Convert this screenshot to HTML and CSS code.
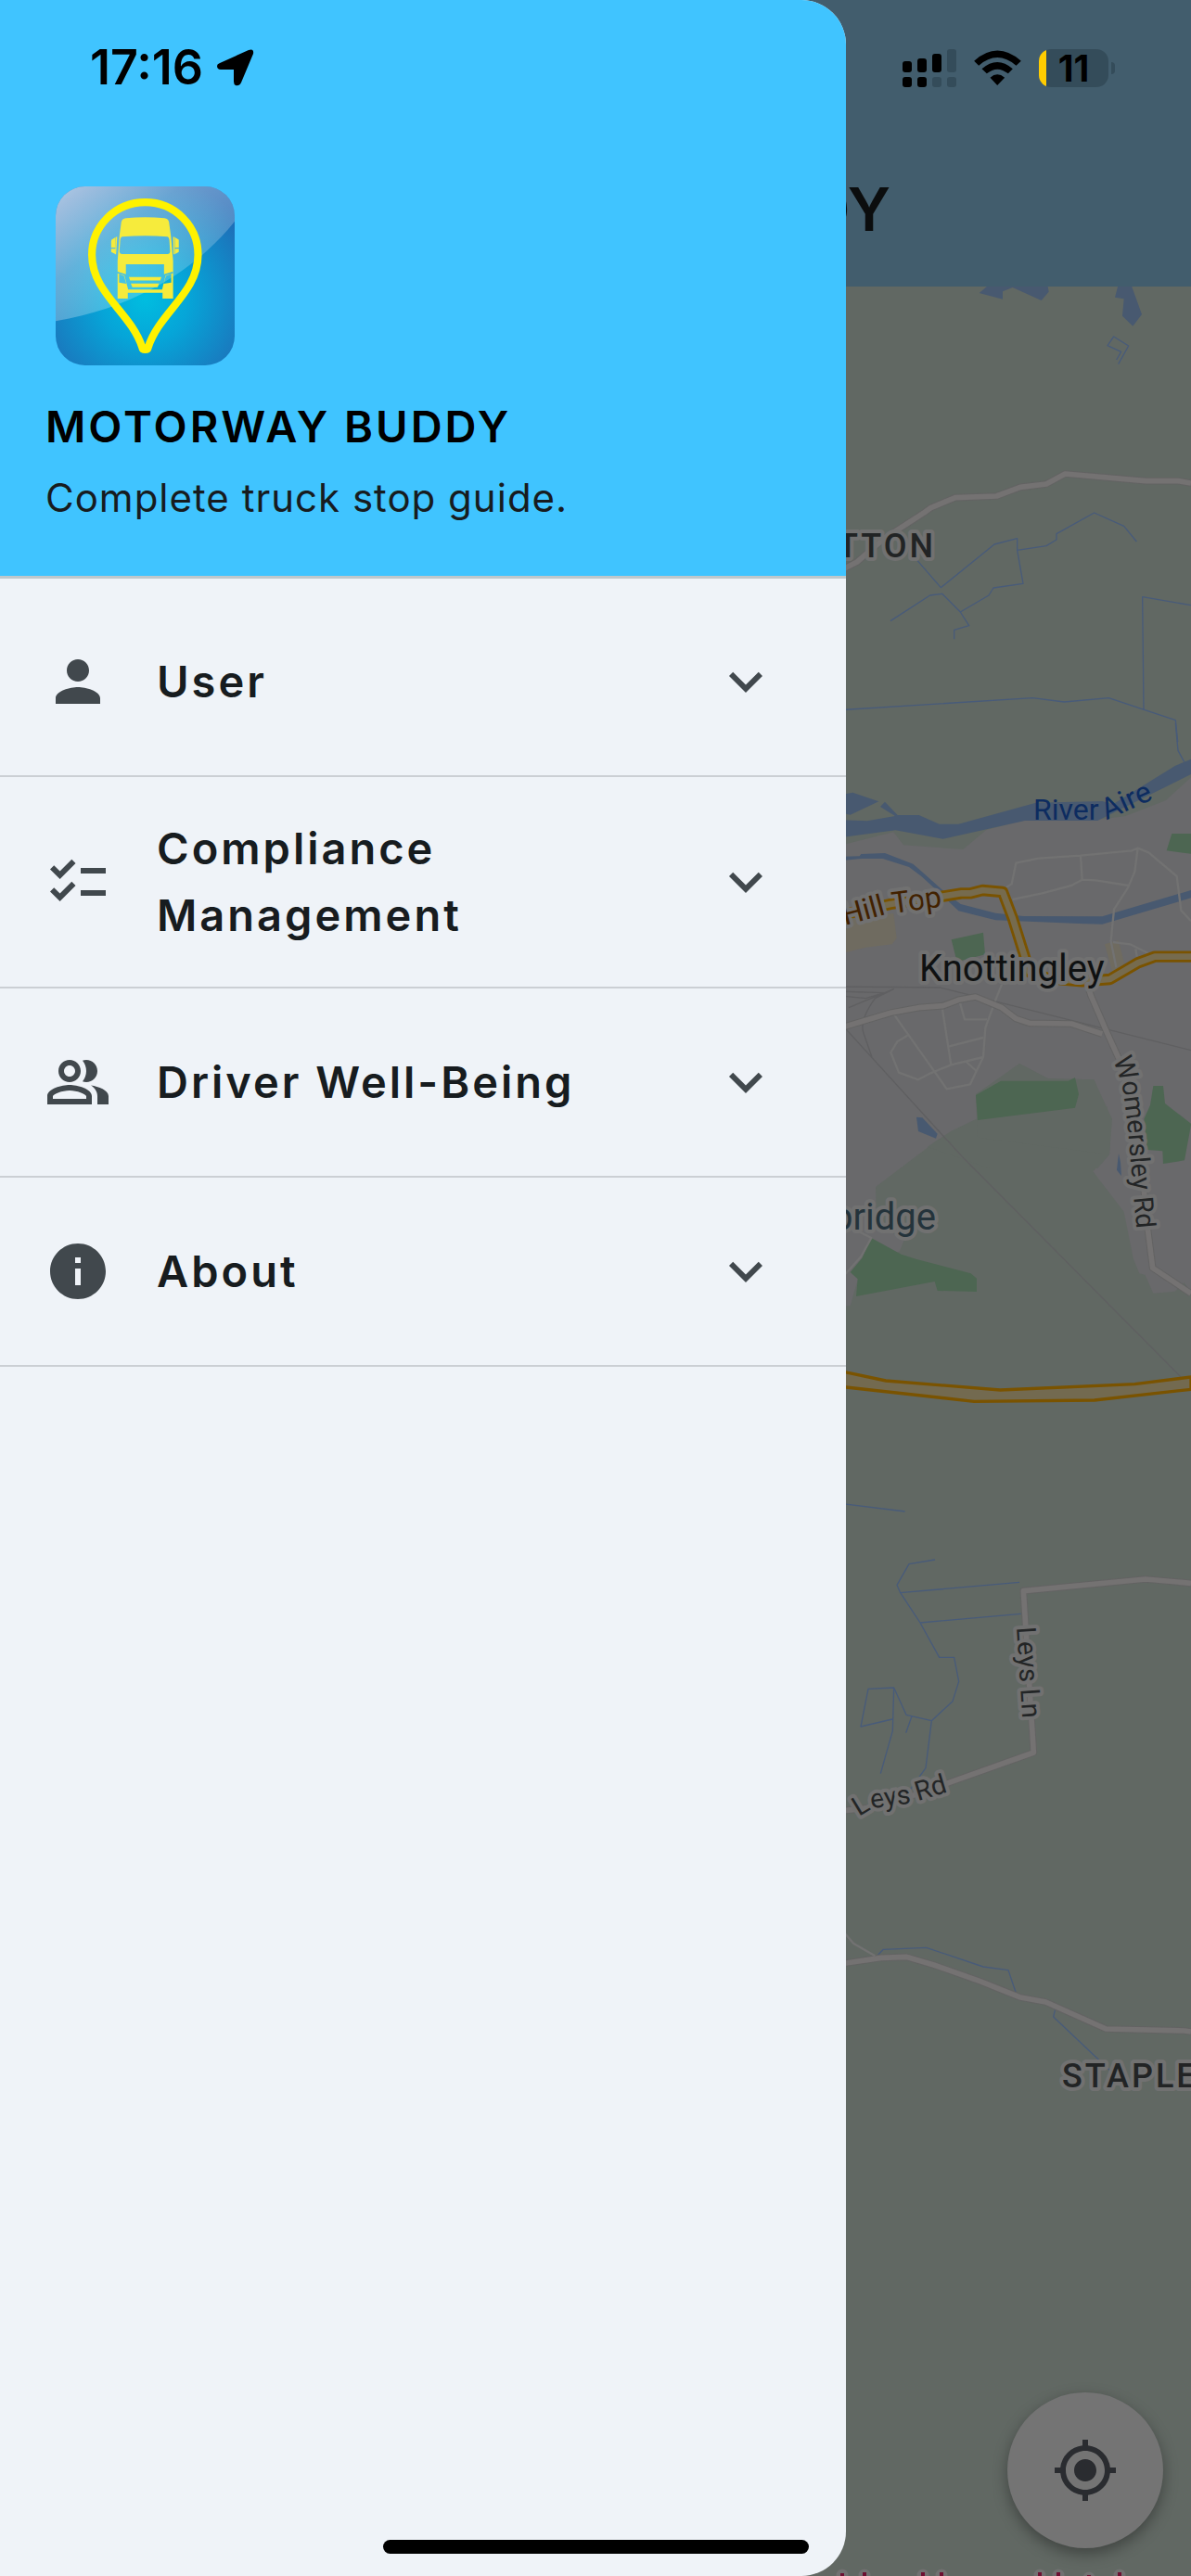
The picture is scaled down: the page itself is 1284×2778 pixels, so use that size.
FILE: index.html
```html
<!DOCTYPE html>
<html lang="en">
<head>
<meta charset="utf-8">
<meta name="viewport" content="width=device-width, initial-scale=1">
<title>Motorway Buddy</title>
<link rel="stylesheet" href="styles.css">
</head>
<body>
<div class="screen">
  <main class="app">
    <header class="app-bar"><h1 class="app-title">MOTORWAY BUDDY</h1></header>
    <div class="map-area">
      <svg class="map" viewBox="0 309 1284 2469" preserveAspectRatio="xMaxYMin slice" role="img" aria-label="Map around Knottingley">
        <!-- Built-up area -->
        <g transform="translate(900 780) scale(.33333)">
          <path class="urban" d="M0 400 190 352 222 394 415 408 490 345 620 312 850 312 940 300 1070 250 1152 175V1840L1130 1810 1100 1838 1030 1844 1004 1785 985 1780 965 1730 935 1580 835 1450 888 1395 893 1280 838 1153 690 1150 597 1101 535 1155 456 1200 462 1280 330 1350 132 1500 135 1620 225 1670 210 1707 75 1797 50 1885H0Z"/>
          <path class="ground" d="M375 1320 462 1278 880 1240 890 1320 888 1395 850 1440 500 1440 300 1370Z"/>
          <path class="ground" d="M456 1200 597 1101 690 1150 838 1153 897 1280 888 1395 462 1340Z"/>
          <!-- Parks -->
          <path class="park" d="M1090 357H1152V422L1073 412ZM377 700 480 677 486 748 395 772ZM456 1203 537 1157H755L777 1146 789 1200 777 1244 462 1284ZM1030 1173H1062L1068 1230 1152 1295V1300L1131 1414 1062 1425 1060 1384 1010 1380 1000 1280 1020 1235Z"/>
          <path class="park" d="M118 1665 215 1718 262 1733 440 1780 459 1796V1839L332 1836 323 1806 69 1854 74 1798 50 1776 88 1730Z"/>
          <path class="commercial" d="M0 640 190 615 200 695 185 715 100 725 0 750ZM873 715 917 702 945 810 905 830Z"/>
          <!-- River Aire and canal -->
          <path class="water" d="M0 312 105 316 195 300 147 270 162 254 203 297H272L338 326H400L650 257 865 252 900 262 1100 138 1152 116V165L850 315H615L350 374 196 346 0 372ZM0 235 58 224 142 253 50 296 0 285ZM0 432 80 430 85 423 162 420 253 455 285 483 352 543 407 585 520 614 610 624 865 625 1152 540V565L865 650 790 648 520 637 400 607 335 545 280 495 240 465 155 438 85 438 0 446Z"/>
          <path class="water" d="M264 1274 283 1276 332 1328 327 1343 270 1320ZM918 1392 924 1420 927 1465 912 1445Z"/>
          <path class="rail" d="M0 852 340 855 1152 1058M0 867 160 872 100 890 0 880M45 920 190 860 130 890Q80 960 92 1000L120 1080M0 950 410 1400 1152 2148"/>
          <path class="lane" d="M555 530 572 520 586 452 660 437 795 428 960 412 980 404 1015 418 1106 495 1120 605 1152 640M575 570 670 550 765 525 800 506 845 508 950 525M795 428 800 506M980 404 970 480 948 532 903 602 893 705 910 790M900 708 955 715 1015 745M973 730 977 755M540 845 518 900 487 985 480 1080 458 1125 438 1168 362 1183 190 940M348 925 376 1105 480 1080M370 1045 480 1017M405 905 420 958H492M376 1105 310 1132 270 1153 207 1130 181 1065 202 1030 235 1010M425 1095 458 1125M0 1800 36 1780 85 1725 118 1665 60 1635"/>
          <path class="street-edge" d="M0 992 36 980 180 937 270 920 350 914 400 895 455 885 540 920 585 955 630 970 765 972 865 1005M815 840 828 880 880 1000 930 1110 990 1400 1010 1620 1028 1762 1152 1845"/>
          <path class="street" d="M0 992 36 980 180 937 270 920 350 914 400 895 455 885 540 920 585 955 630 970 765 972 865 1005M815 840 828 880 880 1000 930 1110 990 1400 1010 1620 1028 1762 1152 1845"/>
          <path class="trunk-edge" d="M0 625 180 585 335 562 410 550H440L478 540 543 546 575 630 630 805 690 825 800 835 890 828 980 775 1035 755H1152"/>
          <path class="trunk" d="M0 625 180 585 335 562 410 550H440L478 540 543 546 575 630 630 805 690 825 800 835 890 828 980 775 1035 755H1152"/>
          <path class="motorway" d="M0 2092 36 2100 165 2127 535 2157 970 2138 1152 2115V2155L840 2190 450 2194 36 2148 0 2144Z"/>
          <path class="stream" d="M1102 0 1110 88 1130 125"/>
        </g>
        <!-- Northern fields -->
        <g transform="translate(900 300) scale(.33333)">
          <path class="water" d="M467 48 500 20H688L692 44 668 72 575 30 543 43V68ZM917 20H958L993 117 964 155 930 122 935 67 906 62Z"/>
          <path class="stream" d="M917 278 950 219 902 189 882 218 926 238 911 264M225 865 343 1001 516 861 590 842V880L609 988 513 1002 498 1026 406 1080 347 1021 308 1026 180 1109M590 880 684 866 717 846V827L839 759 935 802 976 852M406 1080 434 1124 386 1138V1168M0 1398 640 1358 742 1371 886 1358 1102 1430 1109 1500M1152 1058 995 1031 999 1395"/>
          <path class="street-edge" d="M0 955 36 937 72 918 160 842 290 758 312 742 390 710 523 705 600 676 684 666 745 633 1005 656H1110L1152 663"/>
          <path class="street" d="M0 955 36 937 72 918 160 842 290 758 312 742 390 710 523 705 600 676 684 666 745 633 1005 656H1110L1152 663"/>
        </g>
        <!-- Southern fields -->
        <g transform="translate(900 1600) scale(.33333)">
          <path class="stream" d="M0 62 227 90M324 246 240 260 201 328 212 353 597 319M212 353 276 450 602 421M276 450 338 562H386L401 640 381 704 313 767 231 748 191 660 108 664 84 786 186 762M191 660 187 800 148 938M249 752 230 806M313 767 294 920 240 995M140 1524 157 1507 296 1501 480 1563 561 1574 585 1645M713 1700 707 1725 890 1898"/>
          <path class="street-edge" d="M0 1058 36 1057 150 1045 370 967 643 870 610 347 1005 309 1152 322M0 1554 36 1551 150 1534 231 1531 320 1557 470 1610 597 1661 682 1677 877 1764 1130 1770 1152 1773"/>
          <path class="street" d="M0 1058 36 1057 150 1045 370 967 643 870 610 347 1005 309 1152 322M0 1554 36 1551 150 1534 231 1531 320 1557 470 1610 597 1661 682 1677 877 1764 1130 1770 1152 1773"/>
          <path class="lane" d="M20 1440 60 1487 130 1528"/>
        </g>
        <defs>
          <path id="river-line" d="M1114 884H1194L1250 859"/>
          <path id="hill-line" d="M911 998 955 986 1020 977"/>
          <path id="womersley-line" d="M1200 1143 1210 1170 1216 1218 1227 1345"/>
          <path id="leys-lane-line" d="M1096 1755 1103 1865"/>
          <path id="leys-road-line" d="M926 1959 941 1950 980 1945 1040 1927"/>
        </defs>
        <text class="label label-river"><textPath href="#river-line">River Aire</textPath></text>
        <text class="label label-road label-trunk"><textPath href="#hill-line">Hill Top</textPath></text>
        <text class="label label-road"><textPath href="#womersley-line">Womersley Rd</textPath></text>
        <text class="label label-road"><textPath href="#leys-lane-line">Leys Ln</textPath></text>
        <text class="label label-road"><textPath href="#leys-road-line">Leys Rd</textPath></text>
        <text class="label label-area" x="1009" y="601" text-anchor="end">TTON</text>
        <text class="label label-area" x="1145" y="2251">STAPLE</text>
        <text class="label label-town" x="991" y="1058">Knottingley</text>
        <text class="label label-suburb" x="1009" y="1326" text-anchor="end">bridge</text>
        <path class="poi-halo" d="M908 2777V2790M932 2777V2790M995 2777V2790M1015 2777V2790M1121 2777V2790M1141 2777V2790M1174 2780V2790M1207 2777V2790"/>
        <path class="poi" d="M908 2775V2790M932 2774V2790M995 2774V2790M1015 2774V2790M1121 2774V2790M1141 2774V2790M1174 2777V2790M1207 2774V2790"/>
      </svg>
      <button class="locate" type="button" aria-label="My location">
        <svg class="icon" viewBox="0 0 24 24" aria-hidden="true"><path d="M12 8c-2.21 0-4 1.79-4 4s1.79 4 4 4 4-1.79 4-4-1.79-4-4-4zm8.94 3A8.994 8.994 0 0 0 13 3.06V1h-2v2.06A8.994 8.994 0 0 0 3.06 11H1v2h2.06A8.994 8.994 0 0 0 11 20.94V23h2v-2.06A8.994 8.994 0 0 0 20.94 13H23v-2h-2.06zM12 19c-3.87 0-7-3.13-7-7s3.13-7 7-7 7 3.13 7 7-3.13 7-7 7z"/></svg>
      </button>
    </div>
  </main>

  <aside class="drawer">
    <header class="drawer-header">
      <svg class="logo" viewBox="146 492 474 474" role="img" aria-label="Motorway Buddy logo">
        <defs>
          <radialGradient id="tile" gradientUnits="userSpaceOnUse" cx="383" cy="790" r="330">
            <stop offset="0" stop-color="#00bde0"/><stop offset=".35" stop-color="#06a5d8"/><stop offset="1" stop-color="#2168b4"/>
          </radialGradient>
          <linearGradient id="gloss" x1="0" y1="0" x2="1" y2="1">
            <stop offset="0" stop-color="#fff" stop-opacity=".65"/><stop offset=".35" stop-color="#fff" stop-opacity=".34"/><stop offset="1" stop-color="#fff" stop-opacity=".06"/>
          </linearGradient>
          <clipPath id="tile-clip"><rect x="146" y="492" width="474" height="474" rx="78"/></clipPath>
        </defs>
        <g clip-path="url(#tile-clip)">
          <rect x="146" y="492" width="474" height="474" fill="url(#tile)"/>
          <path d="M146 492H620V585C520 710 360 812 146 849Z" fill="url(#gloss)"/>
        </g>
        <g fill="#f6eb3c">
          <path fill-rule="evenodd" d="M320 586Q322 577 332 576 383 571 434 576 444 577 446 586L451 622 457 690V789H429V774H337V789H310V690L315 622ZM322 625Q318 626 317 634L315 664Q315 671 322 671H442Q449 671 449 664L447 634Q446 626 442 625 383 620 322 625ZM332 698V725L310 718V722L328 728 338 765H428L437 728 456 722V718L433 725V698ZM314 724V747L333 750 327 729ZM452 724 438 729 432 750 452 747Z"/>
          <path d="M340 732H426L423 741H343ZM345 749H420L416 759H349ZM305 626H309L306 672H304ZM294 633 304 627V654H293V638ZM293 657H304V671L293 666ZM457 626H461V672H458ZM462 627 472 633V654H462ZM462 657H472V666L462 671Z"/>
        </g>
        <path d="M383 534C304 534 242 597 242 673 242 775 345 825 375 918Q376 924 383 924 390 924 391 918C421 825 523 775 523 673 523 597 462 534 383 534Z" fill="none" stroke="#fff200" stroke-width="20"/>
      </svg>
      <p class="brand">MOTORWAY BUDDY</p>
      <p class="tagline">Complete truck stop guide.</p>
    </header>
    <nav class="menu" aria-label="Main menu">
      <button class="menu-item" type="button" aria-expanded="false">
        <svg class="icon" viewBox="0 0 24 24" aria-hidden="true"><path d="M12 12c2.21 0 4-1.79 4-4s-1.79-4-4-4-4 1.79-4 4 1.79 4 4 4zm0 2c-2.67 0-8 1.34-8 4v2h16v-2c0-2.66-5.33-4-8-4z"/></svg>
        <span class="menu-label">User</span>
        <svg class="icon" viewBox="0 0 24 24" aria-hidden="true"><path d="M16.59 8.59 12 13.17 7.41 8.59 6 10l6 6 6-6z"/></svg>
      </button>
      <button class="menu-item" type="button" aria-expanded="false">
        <svg class="icon" viewBox="0 0 24 24" aria-hidden="true"><path d="M22 7h-9v2h9V7zm0 8h-9v2h9v-2zM5.54 11 2 7.46l1.41-1.41 2.12 2.12 4.24-4.24 1.41 1.41L5.54 11zm0 8L2 15.46l1.41-1.41 2.12 2.12 4.24-4.24 1.41 1.41L5.54 19z"/></svg>
        <span class="menu-label">Compliance Management</span>
        <svg class="icon" viewBox="0 0 24 24" aria-hidden="true"><path d="M16.59 8.59 12 13.17 7.41 8.59 6 10l6 6 6-6z"/></svg>
      </button>
      <button class="menu-item" type="button" aria-expanded="false">
        <svg class="icon" viewBox="0 0 24 24" aria-hidden="true"><path d="M16.67 13.13C18.04 14.06 19 15.32 19 17v3h4v-3c0-2.18-3.57-3.47-6.33-3.87zM15 12c2.21 0 4-1.79 4-4s-1.79-4-4-4c-.47 0-.91.1-1.33.24C14.5 5.27 15 6.58 15 8s-.5 2.73-1.33 3.76c.42.14.86.24 1.33.24zM9 12c2.21 0 4-1.79 4-4s-1.79-4-4-4-4 1.79-4 4 1.79 4 4 4zm0-6c1.1 0 2 .9 2 2s-.9 2-2 2-2-.9-2-2 .9-2 2-2zm0 7c-2.67 0-8 1.34-8 4v3h16v-3c0-2.66-5.33-4-8-4zm6 5H3v-.99C3.2 16.29 6.3 15 9 15s5.8 1.29 6 2v1z"/></svg>
        <span class="menu-label">Driver Well-Being</span>
        <svg class="icon" viewBox="0 0 24 24" aria-hidden="true"><path d="M16.59 8.59 12 13.17 7.41 8.59 6 10l6 6 6-6z"/></svg>
      </button>
      <button class="menu-item" type="button" aria-expanded="false">
        <svg class="icon" viewBox="0 0 24 24" aria-hidden="true"><path d="M12 2C6.48 2 2 6.48 2 12s4.480 10 10 10 10-4.480 10-10S17.520 2 12 2zm1 15h-2v-6h2v6zm0-8h-2V7h2v2z"/></svg>
        <span class="menu-label">About</span>
        <svg class="icon" viewBox="0 0 24 24" aria-hidden="true"><path d="M16.59 8.59 12 13.17 7.41 8.59 6 10l6 6 6-6z"/></svg>
      </button>
    </nav>
  </aside>

  <div class="status-bar">
    <div class="status-group">
      <span class="time">17:16</span>
      <svg class="arrow" viewBox="0 0 40 40" aria-hidden="true"><path d="M3 15 34 1Q40-1 39 5L26 36Q24 40 20 39 18 38 18 35V22H4Q0 22 0 18 0 16 3 15Z"/></svg>
    </div>
    <div class="status-group status-right">
      <svg class="signal" viewBox="0 0 58 41" aria-hidden="true">
        <rect x="0" y="13" width="10" height="12" rx="3"/><rect x="16" y="10" width="10" height="15" rx="3"/><rect x="32" y="5" width="10" height="20" rx="3"/><rect class="off" x="48" y="0" width="10" height="25" rx="3"/>
        <rect x="0" y="30" width="10" height="11" rx="3"/><rect x="16" y="30" width="10" height="11" rx="3"/><rect class="off" x="32" y="30" width="10" height="11" rx="3"/><rect class="off" x="48" y="30" width="10" height="11" rx="3"/>
      </svg>
      <svg class="wifi" viewBox="511 160 152 114" aria-hidden="true"><path d="M511 195Q586 128 663 195L647 210Q586 158 526 210ZM536 221Q586 177 636 221L621 236Q586 208 552 236ZM563 249Q586 229 610 249L586 274Z"/></svg>
      <div class="battery"><span class="battery-level">11</span></div>
    </div>
  </div>
  <div class="home-indicator"></div>
</div>
</body>
</html>
```
FILE: styles.css
```css
* { box-sizing: border-box; }

body {
  margin: 0;
  font-family: Inter, "Liberation Sans", sans-serif;
  color: #171c1f;
  background: #616863;
}

h1, p { margin: 0; }

button {
  border: 0;
  font: inherit;
  color: inherit;
  cursor: pointer;
}

.screen {
  position: relative;
  min-height: 100vh;
  overflow: hidden;
  display: flex;
}

.icon {
  width: 72px;
  height: 72px;
  flex: none;
  fill: #41484d;
}

/* Dimmed page under the drawer */
.app {
  flex: 1;
  display: flex;
  flex-direction: column;
}

.app-bar {
  height: 309px;
  padding-top: 143px;
  display: flex;
  align-items: center;
  justify-content: center;
  background: #425d6d;
}

.app-title {
  font-size: 65px;
  line-height: 80px;
  font-weight: 600;
  color: #0b0d0e;
}

.map-area {
  position: relative;
  flex: 1;
  background: #616863;
}

.map {
  position: absolute;
  inset: 0;
  width: 100%;
  height: 100%;
}

.urban { fill: #69696b; }
.ground { fill: #616863; }
.park { fill: #4d6652; }
.commercial { fill: #6f6b60; }
.water { fill: #485970; }
.stream, .rail, .lane, .street, .street-edge, .trunk, .trunk-edge {
  fill: none;
  stroke-linejoin: round;
}
.stream { stroke: #485b7a; stroke-width: 4; }
.rail { stroke: #5f5f61; stroke-width: 4; }
.lane { stroke: #727272; stroke-width: 7; }
.street-edge { stroke: #636363; stroke-width: 23; }
.street { stroke: #747272; stroke-width: 17; }
.trunk-edge { stroke: #7a5300; stroke-width: 37; }
.trunk { stroke: #766b4e; stroke-width: 20; }
.motorway { fill: #736a50; stroke: #7a5300; stroke-width: 10; }

.label {
  font-family: Roboto, "Liberation Sans", sans-serif;
  paint-order: stroke;
  stroke: #717171;
  stroke-width: 8px;
  stroke-linejoin: round;
}
.label-river { font-size: 32px; fill: #0d2c60; stroke: none; }
.label-road { font-size: 29px; fill: #232526; }
.label-trunk { font-size: 32px; fill: #422100; }
.label-area { font-size: 36px; font-weight: 500; fill: #222425; letter-spacing: 3px; }
.label-town { font-size: 40px; fill: #0f1112; }
.label-suburb { font-size: 40px; fill: #24333b; }
.poi-halo { stroke: #717171; stroke-width: 13; stroke-linecap: round; }
.poi { stroke: #6d0f31; stroke-width: 4; }

.locate {
  position: absolute;
  right: 30px;
  bottom: 30px;
  width: 168px;
  height: 168px;
  padding: 0;
  display: grid;
  place-items: center;
  border-radius: 50%;
  background: #747474;
  box-shadow: 0 6px 16px rgba(0, 0, 0, .35);
}
.locate .icon { fill: #2a2c30; }

/* Drawer */
.drawer {
  position: absolute;
  top: 0;
  bottom: 0;
  left: 0;
  width: 71%;
  overflow: hidden;
  border-radius: 0 48px 48px 0;
  background: #eff3f8;
}

.drawer-header {
  display: flex;
  flex-direction: column;
  align-items: flex-start;
  padding: 201px 48px 48px 49px;
  border-bottom: 3px solid #bfc8cc;
  background: #40c4ff;
}

.logo {
  width: 193px;
  height: 193px;
  margin-left: 11px;
}

.brand {
  margin-top: 30px;
  font-size: 47px;
  line-height: 72px;
  font-weight: 600;
  letter-spacing: 3px;
  color: #000;
}

.tagline {
  margin-top: 5px;
  font-size: 42px;
  line-height: 72px;
  letter-spacing: 1px;
}

.menu {
  display: flex;
  flex-direction: column;
  padding-top: 10px;
}

.menu-item {
  display: flex;
  align-items: center;
  gap: 49px;
  min-height: 204px;
  padding: 41px 72px 41px 48px;
  border-bottom: 2px solid #cbcfd4;
  background: none;
  text-align: left;
}

.menu-label {
  flex: 1;
  font-size: 47px;
  line-height: 72px;
  font-weight: 600;
  letter-spacing: 3px;
}

/* System overlays */
.status-bar {
  position: absolute;
  top: 0;
  left: 0;
  right: 0;
  height: 146px;
  padding: 0 82px 0 97px;
  display: flex;
  align-items: center;
  justify-content: space-between;
  color: #000;
}

.status-group {
  display: flex;
  align-items: center;
  gap: 15px;
}

.status-right { gap: 19px; }

.time {
  font-size: 52px;
  line-height: 60px;
  font-weight: 600;
}

.arrow { width: 40px; height: 40px; }
.signal { width: 58px; height: 41px; }
.signal .off { fill: #344c5a; }
.wifi { width: 51px; height: 38px; }

.battery {
  position: relative;
  width: 75px;
  height: 41px;
  margin-right: 7px;
  display: grid;
  place-items: center;
  border-radius: 13px;
  background: linear-gradient(90deg, #ffcc00 8px, #344c5a 8px);
}

.battery::after {
  content: "";
  position: absolute;
  right: -7px;
  top: 14px;
  width: 4px;
  height: 13px;
  border-radius: 0 4px 4px 0;
  background: #344c5a;
}

.battery-level {
  font-size: 39px;
  line-height: 41px;
  font-weight: 700;
}

.home-indicator {
  position: absolute;
  left: 50%;
  bottom: 24px;
  width: 459px;
  height: 15px;
  margin-left: -229px;
  border-radius: 8px;
  background: #000;
}
```
